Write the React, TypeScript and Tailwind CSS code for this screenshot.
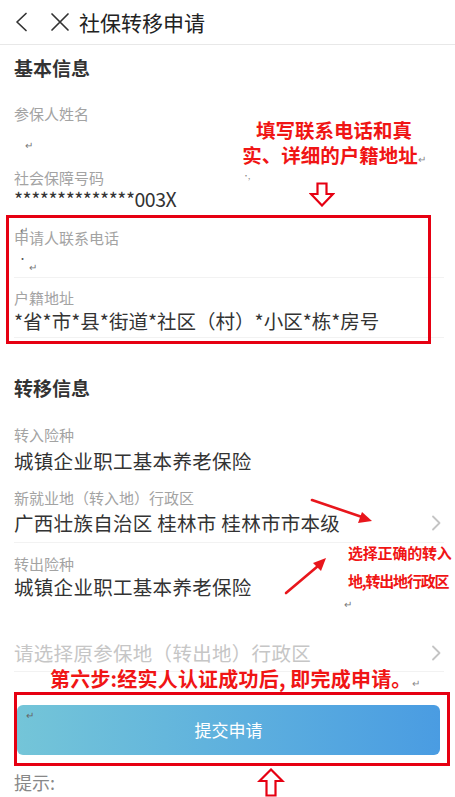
import React from "react";

function Chevron() {
  return (
    <svg width="10" height="16" viewBox="0 0 10 16" className="shrink-0">
      <path d="M2 1.5 L8.5 8 L2 14.5" fill="none" stroke="#c4c4c4" strokeWidth="1.8" strokeLinecap="round" strokeLinejoin="round" />
    </svg>
  );
}

function Label({ children, className = "" }: { children: React.ReactNode; className?: string }) {
  return <div className={`h-[20px] leading-[20px] text-[15px] text-[#a3a3a3] ${className}`}>{children}</div>;
}

function Value({ children, className = "" }: { children: React.ReactNode; className?: string }) {
  return <div className={`h-[22px] leading-[22px] text-[19.5px] text-[#333] whitespace-nowrap ${className}`}>{children}</div>;
}

export default function App() {
  return (
    <div className="relative w-[455px] h-[797px] overflow-hidden bg-white font-['Noto_Sans_CJK_SC','Noto_Sans',sans-serif] text-[#333]">
      {/* header */}
      <div className="flex items-center h-[45px] border-b border-[#e8e8e8]">
        <svg width="14" height="20" viewBox="0 0 14 20" className="ml-[14px]">
          <path d="M12 1.5 L3 10 L12 18.5" fill="none" stroke="#333" strokeWidth="1.7" strokeLinecap="round" strokeLinejoin="round" />
        </svg>
        <svg width="20" height="20" viewBox="0 0 20 20" className="ml-[22px]">
          <path d="M2 2 L18 18 M18 2 L2 18" fill="none" stroke="#333" strokeWidth="1.7" strokeLinecap="round" />
        </svg>
        <div className="ml-[9px] text-[21px] leading-[28px] text-[#222]">社保转移申请</div>
      </div>

      <div className="flex flex-col pl-[14px] pr-[11px]">
        <div className="h-[46px] leading-[46px] text-[19px] font-bold text-[#333]">基本信息</div>

        <Label className="mt-[13px]">参保人姓名</Label>
        <div className="mt-[11px] h-[20px] leading-[20px] pl-[11px] text-[10px] text-[#777]">↵</div>

        <div className="relative mt-[13px] flex flex-col">
          <Label>社会保障号码</Label>
          <span className="absolute left-[230px] top-[2px] text-[8px] text-[#888]">˙,</span>
          <Value className="tracking-[-0.5px]">**************003X</Value>
        </div>

        <div className="relative mt-[18px]">
          <Label>申请人联系电话</Label>
          <span className="absolute left-[6px] top-[-6px] text-[10px] text-[#777]">↵</span>
        </div>
        <div className="h-[20px] mt-[9px] border-b border-[#f2f2f2] box-content relative">
          <span className="absolute left-[4px] top-[-5px] text-[9px] text-[#555]">·</span>
          <span className="absolute left-[15px] top-[2px] text-[10px] text-[#777]">↵</span>
        </div>

        <Label className="mt-[10px]">户籍地址</Label>
        <div className="mt-[2px] pb-[5px] border-b border-[#f2f2f2]">
          <Value>*省*市*县*街道*社区（村）*小区*栋*房号</Value>
        </div>

        <div className="mt-[27px] h-[46px] leading-[46px] text-[19px] font-bold text-[#333]">转移信息</div>

        <Label className="mt-[14px]">转入险种</Label>
        <Value className="mt-[5px] tracking-[0.3px]">城镇企业职工基本养老保险</Value>

        <Label className="mt-[16px]">新就业地（转入地）行政区</Label>
        <div className="mt-[4px] pb-[8px] border-b border-[#f2f2f2] flex items-center justify-between pr-[3px]">
          <Value className="tracking-[0.3px]">广西壮族自治区 桂林市 桂林市市本级</Value>
          <Chevron />
        </div>

        <Label className="mt-[11px]">转出险种</Label>
        <Value className="mt-[2px] tracking-[0.3px]">城镇企业职工基本养老保险</Value>

        <div className="mt-[44px] pb-[7px] border-b border-[#f2f2f2] flex items-center justify-between pr-[3px]">
          <div className="h-[22px] leading-[22px] text-[19.5px] text-[#c6c6c6] whitespace-nowrap tracking-[0.3px]">请选择原参保地（转出地）行政区</div>
          <Chevron />
        </div>

        <button className="relative mt-[33px] ml-[3px] w-[423px] h-[50px] rounded-[6px] bg-gradient-to-r from-[#74c5d8] to-[#4a9ce2] text-white text-[17px] flex items-center justify-center">
          <span className="absolute left-[9px] top-[2px] text-[10px] text-[#666]">↵</span>
          提交申请
        </button>

        <div className="mt-[17px] h-[20px] leading-[20px] text-[18px] text-[#888]">提示:</div>
      </div>

      {/* annotation overlays */}
      <div className="absolute left-[229px] top-[117px] w-[210px] flex flex-col items-center text-[19.5px] leading-[25px] font-bold text-[#f01515] whitespace-nowrap">
        <div>填写联系电话和真</div>
        <div>
          实、详细的户籍地址<span className="text-[10px] font-normal text-[#888]">↵</span>
        </div>
      </div>

      <svg className="absolute left-[309px] top-[182px]" width="26" height="25" viewBox="0 0 26 25">
        <path d="M8.5 1.5 H17.5 V12 H24 L13 23.5 L2 12 H8.5 Z" fill="white" stroke="#e60012" strokeWidth="2.2" strokeLinejoin="miter" />
      </svg>

      <div className="absolute left-[6px] top-[215px] w-[425px] h-[129px] border-[3px] border-[#e60012]" />

      <svg className="absolute left-[280px] top-[494px]" width="100" height="106" viewBox="0 0 100 106">
        <line x1="32" y1="6" x2="82" y2="23" stroke="#e8161c" strokeWidth="2.6" strokeLinecap="round" />
        <path d="M92 27 L78 29 L82 18 Z" fill="#e8161c" />
        <line x1="6" y1="99" x2="38" y2="72" stroke="#e8161c" strokeWidth="2.6" strokeLinecap="round" />
        <path d="M46 64 L41 77 L33 69 Z" fill="#e8161c" />
      </svg>

      <div className="absolute left-[348px] top-[539px] flex flex-col text-[15px] leading-[28px] font-bold text-[#f01515] whitespace-nowrap">
        <div className="tracking-[-0.2px]">选择正确的转入</div>
        <div className="tracking-[-1.2px]">地,转出地行政区</div>
      </div>
      <div className="absolute left-[344px] top-[596px] text-[10px] text-[#777]">↵</div>

      <div className="absolute left-[50px] top-[667px] h-[24px] leading-[24px] text-[20px] font-bold text-[#f01515] whitespace-nowrap tracking-[0.2px]">
        第六步:经实人认证成功后, 即完成申请。<span className="text-[10px] font-normal text-[#888]">↵</span>
      </div>

      <div className="absolute left-[14px] top-[692px] w-[436px] h-[74px] border-[3px] border-[#e60012]" />

      <svg className="absolute left-[257px] top-[768px]" width="28" height="29" viewBox="0 0 28 29">
        <path d="M9.5 27.5 H18.5 V13 H25.5 L14 1.5 L2.5 13 H9.5 Z" fill="white" stroke="#e60012" strokeWidth="2.2" strokeLinejoin="miter" />
      </svg>
    </div>
  );
}
